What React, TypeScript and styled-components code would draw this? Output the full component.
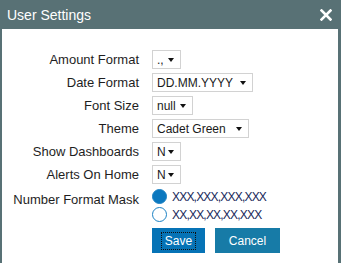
import styled, { createGlobalStyle } from 'styled-components';

const GlobalStyle = createGlobalStyle`
  body {
    margin: 0;
    font-family: "Liberation Sans", Arial, sans-serif;
    background: #ffffff;
  }
`;

const selects = [
  { label: 'Amount Format', value: '.,', width: 29 },
  { label: 'Date Format', value: 'DD.MM.YYYY', width: 101 },
  { label: 'Font Size', value: 'null', width: 41 },
  { label: 'Theme', value: 'Cadet Green', width: 97 },
  { label: 'Show Dashboards', value: 'N', width: 29 },
  { label: 'Alerts On Home', value: 'N', width: 29 },
];

const masks = [
  { text: 'XXX,XXX,XXX,XXX', checked: true },
  { text: 'XX,XX,XX,XX,XXX', checked: false },
];

const CloseIcon = () => (
  <svg width="12" height="12" viewBox="0 0 12 12">
    <path d="M1.5 1.5 L10.5 10.5 M10.5 1.5 L1.5 10.5" stroke="#fff" strokeWidth="2.6" strokeLinecap="square" />
  </svg>
);

const App = () => {
  return (
    <>
      <GlobalStyle />
      <Dialog>
        <Header>
          <Title>User Settings</Title>
          <CloseButton>
            <CloseIcon />
          </CloseButton>
        </Header>
        <Form>
          {selects.map((s) => (
            <Row key={s.label}>
              <Label>{s.label}</Label>
              <Select $width={s.width}>
                <span>{s.value}</span>
                <Arrow />
              </Select>
            </Row>
          ))}
          <Row>
            <Label $top>Number Format Mask</Label>
            <RadioGroup>
              {masks.map((m) => (
                <RadioRow key={m.text}>
                  <Radio $checked={m.checked} />
                  <RadioText>{m.text}</RadioText>
                </RadioRow>
              ))}
            </RadioGroup>
          </Row>
          <Row>
            <span />
            <Buttons>
              <Button $width={53} $bg="#0673b6">
                <FocusRing>Save</FocusRing>
              </Button>
              <Button $width={65} $bg="#177ba7">
                Cancel
              </Button>
            </Buttons>
          </Row>
        </Form>
      </Dialog>
    </>
  );
};

const Dialog = styled.div`
  width: 341px;
  height: 263px;
  box-sizing: border-box;
  border-left: 2px solid #587175;
  border-right: 3px solid #587175;
  background: #fff;
  overflow: hidden;
`;

const Header = styled.div`
  height: 29px;
  background: #587175;
  display: flex;
  align-items: center;
  justify-content: space-between;
  margin: 0 -3px 0 -2px;
  padding-left: 7px;
  padding-right: 9px;
`;

const Title = styled.span`
  color: #fff;
  font-size: 14px;
  margin-top: 1px;
`;

const CloseButton = styled.span`
  display: flex;
  align-items: center;
  margin-top: 1px;
`;

const Form = styled.div`
  display: flex;
  flex-direction: column;
  gap: 4px;
  padding-top: 21px;
`;

const Row = styled.div`
  display: grid;
  grid-template-columns: 137px auto;
  column-gap: 13px;
  align-items: center;
`;

const Label = styled.span<{ $top?: boolean }>`
  font-size: 13px;
  color: #1e1e1e;
  text-align: right;
  white-space: nowrap;
  align-self: ${(p) => (p.$top ? 'start' : 'center')};
  margin-top: ${(p) => (p.$top ? '4px' : '0')};
`;

const Select = styled.div<{ $width: number }>`
  width: ${(p) => p.$width}px;
  height: 19px;
  box-sizing: border-box;
  border: 1px solid #d2d2d2;
  background: #fff;
  display: flex;
  align-items: center;
  padding: 0 6px 0 4px;
  font-size: 12px;
  color: #1a1a1a;
  white-space: nowrap;
`;

const Arrow = styled.span`
  margin-left: auto;
  width: 0;
  height: 0;
  border-left: 3.5px solid transparent;
  border-right: 3.5px solid transparent;
  border-top: 4px solid #111;
`;

const RadioGroup = styled.div`
  display: flex;
  flex-direction: column;
  gap: 3px;
  margin-top: 1px;
`;

const RadioRow = styled.div`
  display: flex;
  align-items: center;
  gap: 5px;
  height: 15px;
`;

const Radio = styled.span<{ $checked: boolean }>`
  width: 15px;
  height: 15px;
  flex: none;
  box-sizing: border-box;
  border-radius: 50%;
  border: 1.5px solid #1c82c4;
  background: ${(p) => (p.$checked ? '#0b78bf' : '#fff')};
`;

const RadioText = styled.span`
  font-size: 12px;
  letter-spacing: -0.8px;
  color: #17285a;
  white-space: nowrap;
`;

const Buttons = styled.div`
  display: flex;
  gap: 10px;
  margin-top: 2px;
`;

const Button = styled.div<{ $width: number; $bg: string }>`
  width: ${(p) => p.$width}px;
  height: 25px;
  background: ${(p) => p.$bg};
  color: #fff;
  font-size: 12px;
  display: flex;
  align-items: center;
  justify-content: center;
`;

const FocusRing = styled.span`
  border: 1px dotted #111;
  padding: 1px 3px;
`;

export default App;
